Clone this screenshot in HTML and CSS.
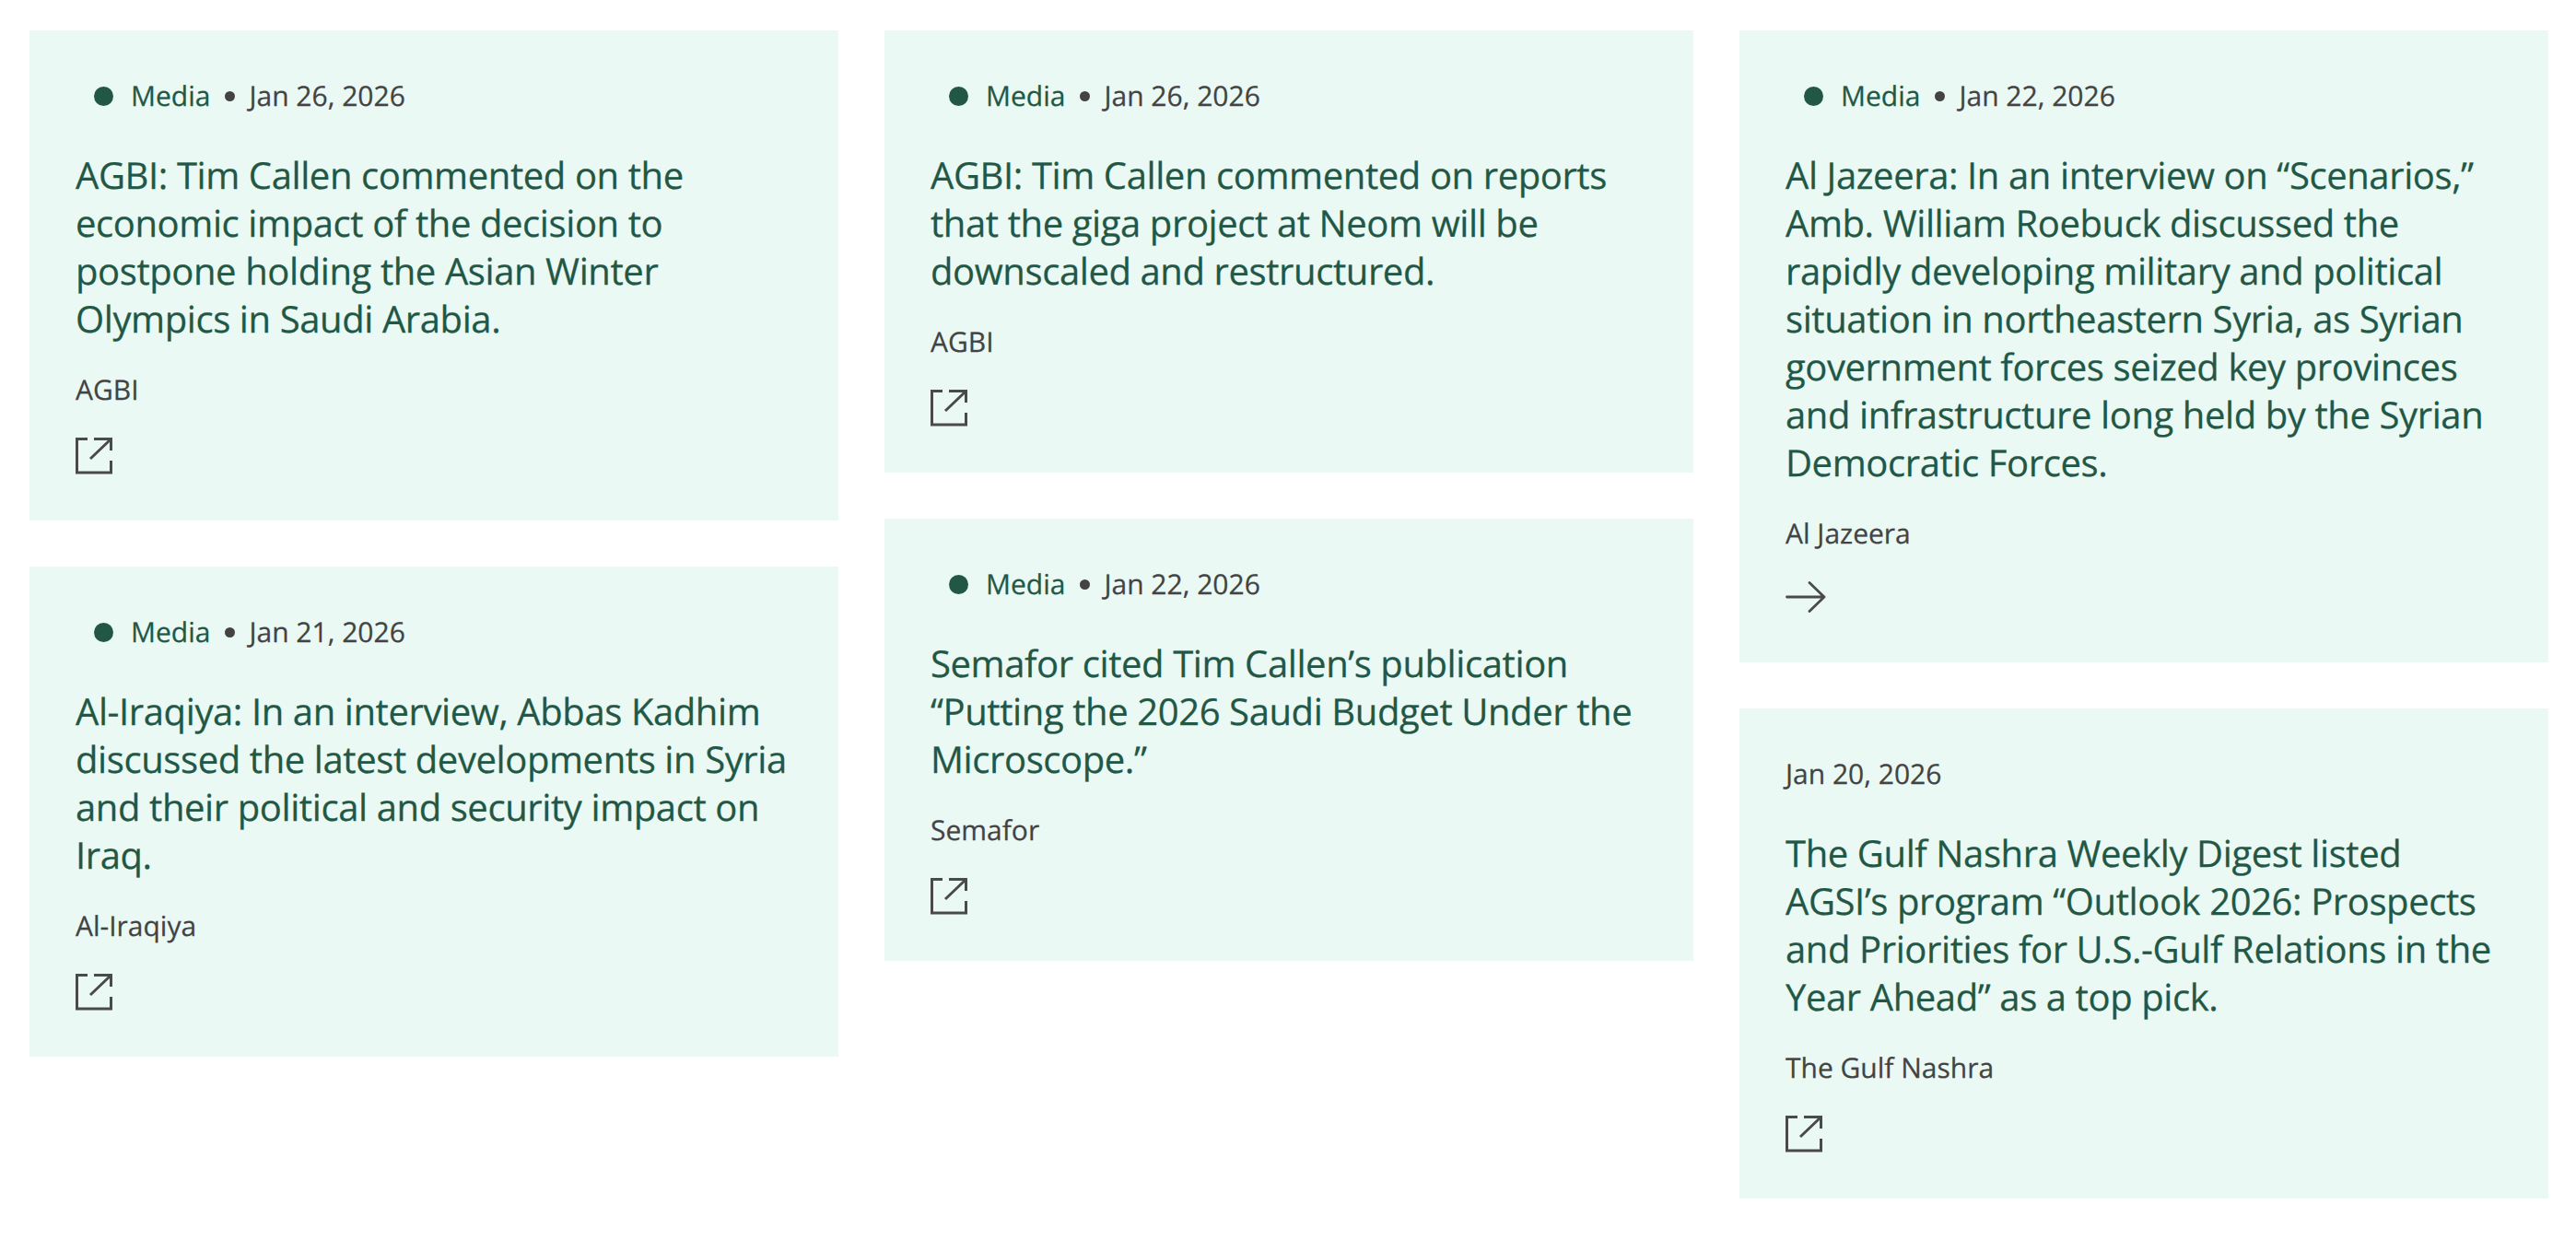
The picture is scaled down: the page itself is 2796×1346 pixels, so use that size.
FILE: index.html
```html
<!DOCTYPE html>
<html lang="en">
<head>
<meta charset="utf-8">
<title>Media</title>
<link rel="stylesheet" href="styles.css">
</head>
<body>
<svg class="sprite" width="0" height="0" aria-hidden="true">
  <symbol id="ext" viewBox="0 0 40 40"><path d="M13 1.500H1.500v36.500h37V25M20 1.500h18.500V14M37.500 2.500 16 23" fill="none" stroke="currentColor" stroke-width="3"/></symbol>
  <symbol id="arr" viewBox="0 0 44 38"><path d="M1.500 17H42M26 1.500 42 17 26 32.500" fill="none" stroke="currentColor" stroke-width="2.800" stroke-linecap="round" stroke-linejoin="round"/></symbol>
</svg>
<main class="grid">
  <div class="col">
    <article class="card">
      <div class="meta"><span class="dot"></span><span class="type">Media</span><span class="sep"></span><span>Jan 26, 2026</span></div>
      <h2>AGBI: Tim Callen commented on the economic impact of the decision to postpone holding the Asian Winter Olympics in Saudi Arabia.</h2>
      <p class="src">AGBI</p>
      <svg class="icon"><use href="#ext"/></svg>
    </article>
    <article class="card">
      <div class="meta"><span class="dot"></span><span class="type">Media</span><span class="sep"></span><span>Jan 21, 2026</span></div>
      <h2>Al-Iraqiya: In an interview, Abbas Kadhim discussed the latest developments in Syria and their political and security impact on Iraq.</h2>
      <p class="src">Al-Iraqiya</p>
      <svg class="icon"><use href="#ext"/></svg>
    </article>
  </div>
  <div class="col">
    <article class="card">
      <div class="meta"><span class="dot"></span><span class="type">Media</span><span class="sep"></span><span>Jan 26, 2026</span></div>
      <h2>AGBI: Tim Callen commented on reports that the giga project at Neom will be downscaled and restructured.</h2>
      <p class="src">AGBI</p>
      <svg class="icon"><use href="#ext"/></svg>
    </article>
    <article class="card">
      <div class="meta"><span class="dot"></span><span class="type">Media</span><span class="sep"></span><span>Jan 22, 2026</span></div>
      <h2>Semafor cited Tim Callen’s publication “Putting the 2026 Saudi Budget Under the Microscope.”</h2>
      <p class="src">Semafor</p>
      <svg class="icon"><use href="#ext"/></svg>
    </article>
  </div>
  <div class="col">
    <article class="card">
      <div class="meta"><span class="dot"></span><span class="type">Media</span><span class="sep"></span><span>Jan 22, 2026</span></div>
      <h2>Al Jazeera: In an interview on “Scenarios,” Amb. William Roebuck discussed the rapidly developing military and political situation in northeastern Syria, as Syrian government forces seized key provinces and infrastructure long held by the Syrian Democratic Forces.</h2>
      <p class="src">Al Jazeera</p>
      <svg class="icon arrow"><use href="#arr"/></svg>
    </article>
    <article class="card">
      <div class="meta plain"><span>Jan 20, 2026</span></div>
      <h2>The Gulf Nashra Weekly Digest listed AGSI’s program “Outlook 2026: Prospects and Priorities for U.S.-Gulf Relations in the Year Ahead” as a top pick.</h2>
      <p class="src">The Gulf Nashra</p>
      <svg class="icon"><use href="#ext"/></svg>
    </article>
  </div>
</main>
</body>
</html>
```
FILE: styles.css
```css
html, body {
  margin: 0;
  padding: 0;
  background: #fff;
}
body {
  font-family: "Open Sans", "Noto Sans", sans-serif;
  text-rendering: geometricPrecision;
  -webkit-text-stroke: 0.25px currentColor;
}
.sprite {
  position: absolute;
}
.grid {
  display: grid;
  grid-template-columns: repeat(3, 1fr);
  gap: 50px;
  padding: 33px 30px 0 32px;
}
.col {
  display: flex;
  flex-direction: column;
  gap: 50px;
}
.card {
  background: #eaf9f4;
  padding: 50px;
}
.meta {
  display: flex;
  align-items: center;
  height: 42px;
  padding-left: 20px;
  font-size: 30px;
  line-height: 42px;
  color: #434343;
}
.meta.plain {
  padding-left: 0;
}
.dot {
  width: 21px;
  height: 21px;
  border-radius: 50%;
  background: #225746;
  margin-right: 19px;
}
.type {
  color: #225746;
}
.sep {
  width: 11px;
  height: 11px;
  border-radius: 50%;
  background: #434343;
  margin: 0 15px 0 16px;
}
h2 {
  margin: 39px 0 0;
  font-size: 40px;
  font-weight: 400;
  letter-spacing: -0.4px;
  line-height: 52px;
  color: #225746;
}
.src {
  margin: 30px 0 0;
  font-size: 30px;
  line-height: 42px;
  color: #434343;
}
.icon {
  display: block;
  width: 40px;
  height: 40px;
  margin-top: 31px;
  color: #4a4a4a;
}
.icon.arrow {
  width: 44px;
  height: 38px;
}
```
